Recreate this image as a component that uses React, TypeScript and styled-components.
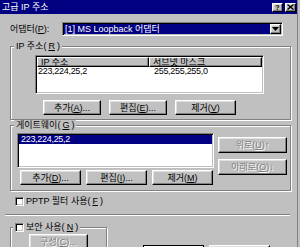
import React from "react";
import styled, { createGlobalStyle, css } from "styled-components";

const GlobalStyle = createGlobalStyle`
  html, body {
    margin: 0;
    padding: 0;
    background: #c0c0c0;
  }
  body {
    font-family: "Liberation Sans", "Noto Sans CJK KR", sans-serif;
    font-size: 9px;
    line-height: 10px;
    color: #000;
  }
`;

const raised = css`
  border: 1px solid;
  border-color: #fff #000 #000 #fff;
  box-shadow: inset -1px -1px #808080, inset 1px 1px #dfdfdf;
  background: #c0c0c0;
`;

const sunken = css`
  border: 1px solid;
  border-color: #808080 #fff #fff #808080;
  box-shadow: inset 1px 1px #000, inset -1px -1px #c0c0c0;
`;

const Window = styled.div`
  width: 298px;
  height: 247px;
  box-sizing: border-box;
  overflow: hidden;
  background: #c0c0c0;
  border-right: 1px solid #808080;
`;

const TitleBar = styled.div`
  height: 14px;
  background: #000080;
  color: #fff;
  display: flex;
  align-items: center;
  padding: 0 1px 0 2px;
`;

const TitleText = styled.span`
  flex: 1;
  white-space: nowrap;
`;

const CaptionButtons = styled.div`
  display: flex;
  gap: 2px;
`;

const CaptionButton = styled.div`
  ${raised};
  width: 11px;
  height: 9px;
  box-sizing: border-box;
  display: flex;
  align-items: center;
  justify-content: center;
  color: #000;
  font-weight: bold;
  font-size: 7px;
  line-height: 7px;
`;

const Body = styled.div`
  display: flex;
  flex-direction: column;
  padding: 0 6px 0 10px;
`;

const AdapterRow = styled.div`
  display: flex;
  align-items: center;
  height: 14px;
  margin-top: 8px;
`;

const FieldLabel = styled.span`
  width: 52px;
  white-space: nowrap;
`;

const Combo = styled.div`
  ${sunken};
  display: flex;
  width: 221px;
  height: 14px;
  box-sizing: border-box;
  padding: 1px;
  background: #fff;
`;

const ComboValue = styled.div`
  flex: 1;
  background: #000080;
  color: #fff;
  line-height: 10px;
  padding-left: 1px;
  white-space: nowrap;
  overflow: hidden;
`;

const DropButton = styled.div`
  ${raised};
  width: 11px;
  box-sizing: border-box;
  display: flex;
  align-items: center;
  justify-content: center;
`;

/* the legend sits at the fieldset's padding edge, so horizontal padding stays 0
   and the inset goes on GroupContent */
const GroupBox = styled.fieldset<{ $top: number; $bottom: number }>`
  margin: 0;
  min-width: 0;
  padding: ${(p) => p.$top}px 0 ${(p) => p.$bottom}px 0;
  border: 1px solid #808080;
  box-shadow: inset 1px 1px #fff, 1px 1px #fff;
`;

const GroupContent = styled.div<{ $left: number; $right?: number; $row?: boolean }>`
  padding: 0 ${(p) => p.$right ?? 0}px 0 ${(p) => p.$left}px;
  display: flex;
  flex-direction: ${(p) => (p.$row ? "row" : "column")};
  align-items: flex-start;
`;

const Legend = styled.legend<{ $offset?: number }>`
  padding: 0 2px;
  margin-left: ${(p) => p.$offset ?? 3}px;
  line-height: 10px;
  background: #c0c0c0;
  display: flex;
  align-items: center;
  gap: 2px;
  white-space: nowrap;
`;

const IpGroup = styled(GroupBox)`
  margin-top: 5px;
`;

const ListView = styled.div`
  ${sunken};
  width: 229px;
  height: 39px;
  box-sizing: border-box;
  padding: 1px;
  background: #fff;
  overflow: hidden;
`;

const HeaderRow = styled.div`
  display: flex;
  height: 10px;
`;

const HeaderCell = styled.div<{ $w?: number }>`
  ${raised};
  box-shadow: inset -1px -1px #808080;
  box-sizing: border-box;
  height: 10px;
  ${(p) => (p.$w ? `width: ${p.$w}px;` : "flex: 1;")}
  padding-left: 3px;
  line-height: 8px;
  overflow: hidden;
  white-space: nowrap;
`;

const DataRow = styled.div`
  display: flex;
  line-height: 9px;
  height: 9px;
  letter-spacing: -0.3px;
`;

const DataCell = styled.div<{ $w?: number }>`
  ${(p) => (p.$w ? `width: ${p.$w}px;` : "flex: 1;")}
  padding-left: 1px;
  white-space: nowrap;
`;

const ButtonRow = styled.div<{ $inset: number; $gap: number }>`
  display: flex;
  gap: ${(p) => p.$gap}px;
  padding-left: ${(p) => p.$inset}px;
  margin-top: 6px;
`;

const Button = styled.button<{ $w: number; $h?: number }>`
  ${raised};
  width: ${(p) => p.$w}px;
  height: ${(p) => p.$h ?? 15}px;
  box-sizing: border-box;
  padding: 0;
  font: inherit;
  color: #000;
  line-height: 10px;
  white-space: nowrap;
  display: flex;
  align-items: center;
  justify-content: center;

  &:disabled {
    color: #808080;
    text-shadow: 1px 1px #fff;
  }
`;

const DefaultButton = styled(Button)`
  border: 1px solid #000;
  box-shadow: inset 1px 1px #fff, inset -1px -1px #000, inset -2px -2px #808080;
`;

const Key = styled.span`
  text-decoration: underline;
`;

const LeftCol = styled.div`
  display: flex;
  flex-direction: column;
`;

const ListBox = styled.div`
  ${sunken};
  width: 197px;
  height: 35px;
  box-sizing: border-box;
  padding: 1px;
  background: #fff;
`;

const ListItem = styled.div<{ $selected?: boolean }>`
  line-height: 9px;
  height: 9px;
  padding-left: 2px;
  letter-spacing: -0.3px;
  background: ${(p) => (p.$selected ? "#000080" : "transparent")};
  color: ${(p) => (p.$selected ? "#fff" : "#000")};
`;

const GatewayButtons = styled(ButtonRow)`
  margin-top: 2px;
`;

const RightCol = styled.div`
  display: flex;
  flex-direction: column;
  gap: 6px;
  margin-left: 4px;
  padding-top: 4px;
`;

const CheckRow = styled.label`
  display: flex;
  align-items: center;
  gap: 2px;
  margin-top: 5px;
  padding-left: 5px;
  height: 10px;
  white-space: nowrap;
`;

const CheckBox = styled.span`
  ${sunken};
  width: 9px;
  height: 9px;
  box-sizing: border-box;
  background: #fff;
  display: inline-block;
  flex: none;
`;

const Separator = styled.div`
  margin: 8px 1px 0 -5px;
  border-top: 1px solid #808080;
  border-bottom: 1px solid #fff;
`;

const BottomRow = styled.div`
  display: flex;
  align-items: flex-start;
  margin-top: 6px;
`;

const SecurityGroup = styled(GroupBox)`
  width: 97px;
  box-sizing: border-box;
  flex: none;
`;

const DialogButtons = styled.div`
  display: flex;
  gap: 5px;
  margin: 23px 0 0 36px;
`;

const DropArrow = () => (
  <svg width="7" height="4" viewBox="0 0 7 4">
    <path d="M0 0h7L3.5 4z" fill="#000" />
  </svg>
);

const CloseGlyph = () => (
  <svg width="7" height="6" viewBox="0 0 7 6">
    <path d="M0.5 0.5l6 5M6.5 0.5l-6 5" stroke="#000" strokeWidth="1.4" />
  </svg>
);

const addresses = [{ ip: "223,224,25,2", mask: "255,255,255,0" }];
const gateways = ["223,224,25,2"];

export default function App() {
  return (
    <>
      <GlobalStyle />
      <Window>
        <TitleBar>
          <TitleText>고급 IP 주소</TitleText>
          <CaptionButtons>
            <CaptionButton>?</CaptionButton>
            <CaptionButton>
              <CloseGlyph />
            </CaptionButton>
          </CaptionButtons>
        </TitleBar>

        <Body>
          <AdapterRow>
            <FieldLabel>
              어댑터(<Key>P</Key>):
            </FieldLabel>
            <Combo>
              <ComboValue>[1] MS Loopback 어댑터</ComboValue>
              <DropButton>
                <DropArrow />
              </DropButton>
            </Combo>
          </AdapterRow>

          <IpGroup $top={4} $bottom={4}>
            <Legend>
              IP 주소(<Key>R</Key>)
            </Legend>
            <GroupContent $left={24}>
              <ListView>
                <HeaderRow>
                  <HeaderCell $w={112}>IP 주소</HeaderCell>
                  <HeaderCell>서브넷 마스크</HeaderCell>
                </HeaderRow>
                {addresses.map((a) => (
                  <DataRow key={a.ip}>
                    <DataCell $w={115}>{a.ip}</DataCell>
                    <DataCell>{a.mask}</DataCell>
                  </DataRow>
                ))}
              </ListView>
              <ButtonRow $inset={8} $gap={8}>
                <Button $w={58}>
                  추가(<Key>A</Key>)...
                </Button>
                <Button $w={58}>
                  편집(<Key>E</Key>)...
                </Button>
                <Button $w={61}>
                  제거(<Key>V</Key>)
                </Button>
              </ButtonRow>
            </GroupContent>
          </IpGroup>

          <GroupBox $top={3} $bottom={5}>
            <Legend>
              게이트웨이(<Key>G</Key>)
            </Legend>
            <GroupContent $left={6} $right={3} $row>
              <LeftCol>
                <ListBox>
                  {gateways.map((g, i) => (
                    <ListItem key={g} $selected={i === 0}>
                      {g}
                    </ListItem>
                  ))}
                </ListBox>
                <GatewayButtons $inset={3} $gap={5}>
                  <Button $w={61}>
                    추가(<Key>D</Key>)...
                  </Button>
                  <Button $w={61}>
                    편집(<Key>I</Key>)...
                  </Button>
                  <Button $w={61}>
                    제거(<Key>M</Key>)
                  </Button>
                </GatewayButtons>
              </LeftCol>
              <RightCol>
                <Button $w={69} $h={16} disabled>
                  위로(<Key>U</Key>)↑
                </Button>
                <Button $w={69} $h={16} disabled>
                  아래로(<Key>O</Key>)↓
                </Button>
              </RightCol>
            </GroupContent>
          </GroupBox>

          <CheckRow>
            <CheckBox />
            PPTP 필터 사용(<Key>F</Key>)
          </CheckRow>

          <Separator />

          <BottomRow>
            <SecurityGroup $top={2} $bottom={10}>
              <Legend $offset={2}>
                <CheckBox />
                보안 사용(<Key>N</Key>)
              </Legend>
              <GroupContent $left={18}>
                <Button $w={59} $h={16} disabled>
                  구성(<Key>C</Key>)...
                </Button>
              </GroupContent>
            </SecurityGroup>
            <DialogButtons>
              <DefaultButton $w={61} $h={16}>
                확인
              </DefaultButton>
              <Button $w={61} $h={16}>
                취소
              </Button>
            </DialogButtons>
          </BottomRow>
        </Body>
      </Window>
    </>
  );
}
